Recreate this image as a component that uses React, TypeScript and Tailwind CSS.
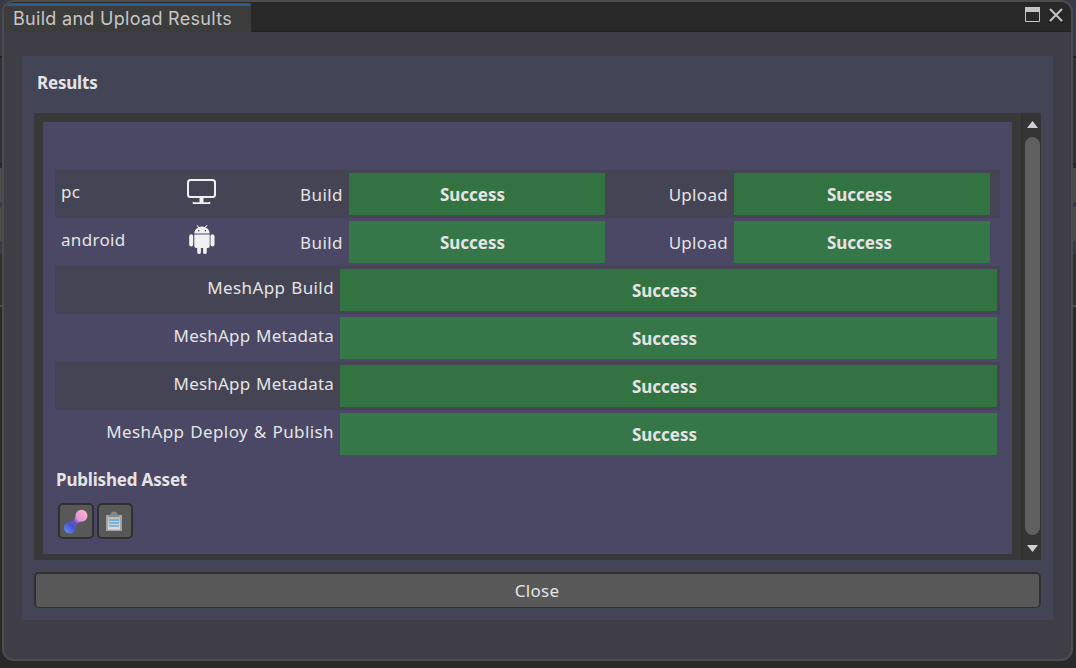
import React from "react";

function MonitorIcon() {
  return (
    <svg width="32" height="28" viewBox="0 0 32 28" className="block">
      <rect x="2" y="2" width="27" height="17" rx="2.500" fill="none" stroke="#f0f0f0" strokeWidth="2" />
      <path d="M13.500 20h4v4.200h5a1 1 0 0 1 1.500 1.800H7a1 1 0 0 1 1.500-1.800h5z" fill="#f0f0f0" />
    </svg>
  );
}

function AndroidIcon() {
  return (
    <svg width="32" height="30" viewBox="-1 0 32 30" className="-mt-px block">
      <g fill="#f0f0f0">
        <path d="M7.300 8.500C7.500 5.500 9 3.500 11.300 2.400L9.500.4 10.200 0l1.900 2.100c1.900-.7 3.900-.7 5.800 0L19.800 0l.7.4-1.800 2c2.300 1.100 3.800 3.100 4 6.100z" />
        <path d="M7.300 9.500h15.400V21a2 2 0 0 1-2 2h-.9v4.200a1.800 1.800 0 0 1-3.700 0V23h-2.200v4.200a1.800 1.800 0 0 1-3.700 0V23h-.9a2 2 0 0 1-2-2z" />
        <rect x="2.200" y="9.200" width="4" height="12.300" rx="2" />
        <rect x="23.500" y="9.200" width="4" height="12.300" rx="2" />
      </g>
      <circle cx="11.700" cy="5.700" r=".8" fill="#4a4863" />
      <circle cx="18.300" cy="5.700" r=".8" fill="#4a4863" />
    </svg>
  );
}

function MeshIcon() {
  return (
    <svg width="26" height="26" viewBox="0 0 26 26" className="shrink-0">
      <defs>
        <linearGradient id="mesh" x1="3" y1="23" x2="22" y2="4" gradientUnits="userSpaceOnUse">
          <stop offset="0" stopColor="#5a8eea" />
          <stop offset=".3" stopColor="#4a4fd0" />
          <stop offset=".5" stopColor="#6a52bd" />
          <stop offset=".65" stopColor="#e090e0" />
          <stop offset="1" stopColor="#f9b0c8" />
        </linearGradient>
      </defs>
      <path d="M18.500.800a6 6 0 0 1 0 12c-3.200 0-5.400 2.400-5.500 6A6 6 0 1 1 7 12.500c3.600 0 5.500-2.300 5.500-5.700a6 6 0 0 1 6-6z" fill="url(#mesh)" />
    </svg>
  );
}

function ClipboardIcon() {
  return (
    <svg width="18" height="21" viewBox="0 0 18 21" className="-ml-[2px] shrink-0">
      <defs>
        <linearGradient id="paper" x1="0" y1="0" x2="0" y2="1">
          <stop offset="0" stopColor="#bcbcbc" />
          <stop offset="1" stopColor="#dedede" />
        </linearGradient>
      </defs>
      <path d="M1 4h16v16H1z" fill="#a4a4a4" />
      <path d="M3 6h12v12.500H3z" fill="url(#paper)" />
      <path d="M4 6V4L6 3a3 2.500 0 0 1 6 0L14 4v2z" fill="#858b8b" />
      <path d="M4 9h10M4 12h10M4 15h10" stroke="#229cdd" strokeWidth="1.200" />
    </svg>
  );
}

function Status({ shaded, wide }: { shaded: boolean; wide?: boolean }) {
  return (
    <div
      className={`flex h-[42px] shrink-0 items-center justify-center pt-[2px] font-bold tracking-[0px] ${
        shaded ? "bg-[#337341]" : "bg-[#36774a]"
      } ${wide ? "w-[657px] pr-[8px]" : "w-64"}`}
    >
      Success
    </div>
  );
}

function PlatformRow({ name, icon, shaded }: { name: string; icon: React.ReactNode; shaded: boolean }) {
  return (
    <div className={`flex h-12 pt-[3px] ${shaded ? "bg-[#444455]" : ""}`}>
      <div className="w-[131px] pt-[7px] pl-[6px]">{name}</div>
      <div className="w-[60px] pt-[5px]">{icon}</div>
      <div className="w-[103px] pt-[10px] pr-[6px] text-right tracking-[0.450px]">Build</div>
      <div className="w-64 *:pr-[9px]">
        <Status shaded={shaded} />
      </div>
      <div className="w-[129px] pt-[10px] pr-[6px] text-right">Upload</div>
      <div className="w-64 *:pr-[5px]">
        <Status shaded={shaded} />
      </div>
    </div>
  );
}

const steps = ["MeshApp Build", "MeshApp Metadata", "MeshApp Metadata", "MeshApp Deploy & Publish"];

function StepRow({ name, shaded }: { name: string; shaded: boolean }) {
  return (
    <div className={`flex h-12 pt-[3px] ${shaded ? "bg-[#444455]" : ""}`}>
      <div
        className={`w-[285px] pt-[7px] pr-[6px] text-right ${
          name.endsWith("Metadata") ? "tracking-[0.200px] [word-spacing:1px]" : "tracking-[0.400px] [word-spacing:1px]"
        }`}
      >
        {name}
      </div>
      <Status shaded={shaded} wide />
    </div>
  );
}

function BackdropEdge() {
  return (
    <div className="flex h-full flex-col bg-[#292929]">
      <div className="h-14 bg-[#3b3a48]" />
      <div className="h-[2px] bg-[#202020]" />
      <div className="h-[105px] bg-[#303036]" />
      <div className="h-px bg-[#202020]" />
      <div className="mt-1 h-[34px] bg-[#4b4b4b]" />
      <div className="h-[5px] bg-[#3b3a48]" />
      <div className="h-[34px] bg-[#4b4b4b]" />
      <div className="h-[13px] bg-[#3b3a48]" />
      <div className="h-[51px] bg-[#303030]" />
      <div className="h-[2px] bg-[#505050]" />
    </div>
  );
}

export default function App() {
  return (
    <div className="grid h-[668px] w-[1076px] grid-cols-[2px_1071px_3px] overflow-hidden bg-[#292929] font-['Noto_Sans',sans-serif] text-[17px] leading-6 tracking-[0.3px] text-[#e4e4e4]">
      <BackdropEdge />
      <div className="h-[668px] bg-[linear-gradient(#3b3a48_0,#3b3a48_20px,#292929_21px)]">
        <main className="h-[661px] overflow-hidden rounded-[12px] border-2 border-[#4c4c4f] bg-[#3f3e47]">
          <header className="flex h-[30px] justify-between border-b border-[#212121] bg-[#282828] pt-px">
            <div className="-mb-px flex w-[247px] items-center rounded-tr-[2px] border-t-[3px] border-[#2c5d87] bg-[#3c3c3c] pl-[9px] font-[Inter] text-[18px] tracking-[0.3px] text-[#c7c7c7]">
              Build and Upload Results
            </div>
            <div className="flex gap-[9px] pt-[4px] pr-[8px]">
              <svg width="15" height="15" viewBox="0 0 15 15">
                <path d="M.5.500h14v14H.5z" fill="none" stroke="#c4c4c4" />
                <path d="M0 0h15v5H0z" fill="#c4c4c4" />
              </svg>
              <svg width="14" height="16" viewBox="0 0 14 16">
                <path d="M1 2l12 12M13 2L1 14" stroke="#c4c4c4" strokeWidth="2" />
              </svg>
            </div>
          </header>

          <section className="mt-6 ml-[18px] flex h-[564px] w-[1031px] flex-col bg-[#444457] px-3 pt-[15px]">
            <h1 className="h-[42px] pl-[3px] font-bold tracking-[-0.200px]">Results</h1>
            <div className="flex h-[447px] w-[1007px] bg-[#383838]">
              <div className="mt-[9px] ml-[9px] h-[432px] w-[969px] bg-[#4a4864] pt-12 pr-3 pl-3">
                <PlatformRow name="pc" icon={<MonitorIcon />} shaded />
                <PlatformRow name="android" icon={<AndroidIcon />} shaded={false} />
                {steps.map((name, i) => (
                  <StepRow key={i} name={name} shaded={i % 2 === 0} />
                ))}
                <h2 className="pt-[10px] pl-px font-bold tracking-[-0.180px]">Published Asset</h2>
                <div className="mt-[11px] ml-[3px] flex gap-[3px]">
                  <button className="flex size-9 items-center justify-center rounded-[5px] border-2 border-[#303030] bg-[#585858] pt-px">
                    <MeshIcon />
                  </button>
                  <button className="flex size-9 items-center justify-center rounded-[5px] border-2 border-[#303030] bg-[#585858]">
                    <ClipboardIcon />
                  </button>
                </div>
              </div>
              <div className="ml-[9px] flex w-5 flex-col items-end border-l-2 border-[#303030] bg-[#353535] pt-[8px] pr-px">
                <svg width="11" height="7" viewBox="0 0 11 7" className="mr-[2.500px] shrink-0">
                  <path d="M0 7L5.500 0 11 7z" fill="#d0d0d0" />
                </svg>
                <div className="mt-[9px] h-[398px] w-[15px] shrink-0 rounded-full bg-[#5f5f5f]" />
                <svg width="11" height="7" viewBox="0 0 11 7" className="mt-[10px] mr-[2.500px] shrink-0">
                  <path d="M0 0l5.500 7L11 0z" fill="#d0d0d0" />
                </svg>
              </div>
            </div>
            <button className="mt-3 flex h-9 w-[1007px] items-center justify-center rounded-[5px] border-x-2 border-t-2 border-b border-[#303030] bg-[#585858] pr-px pt-px">
              Close
            </button>
          </section>
        </main>
      </div>
      <BackdropEdge />
    </div>
  );
}
